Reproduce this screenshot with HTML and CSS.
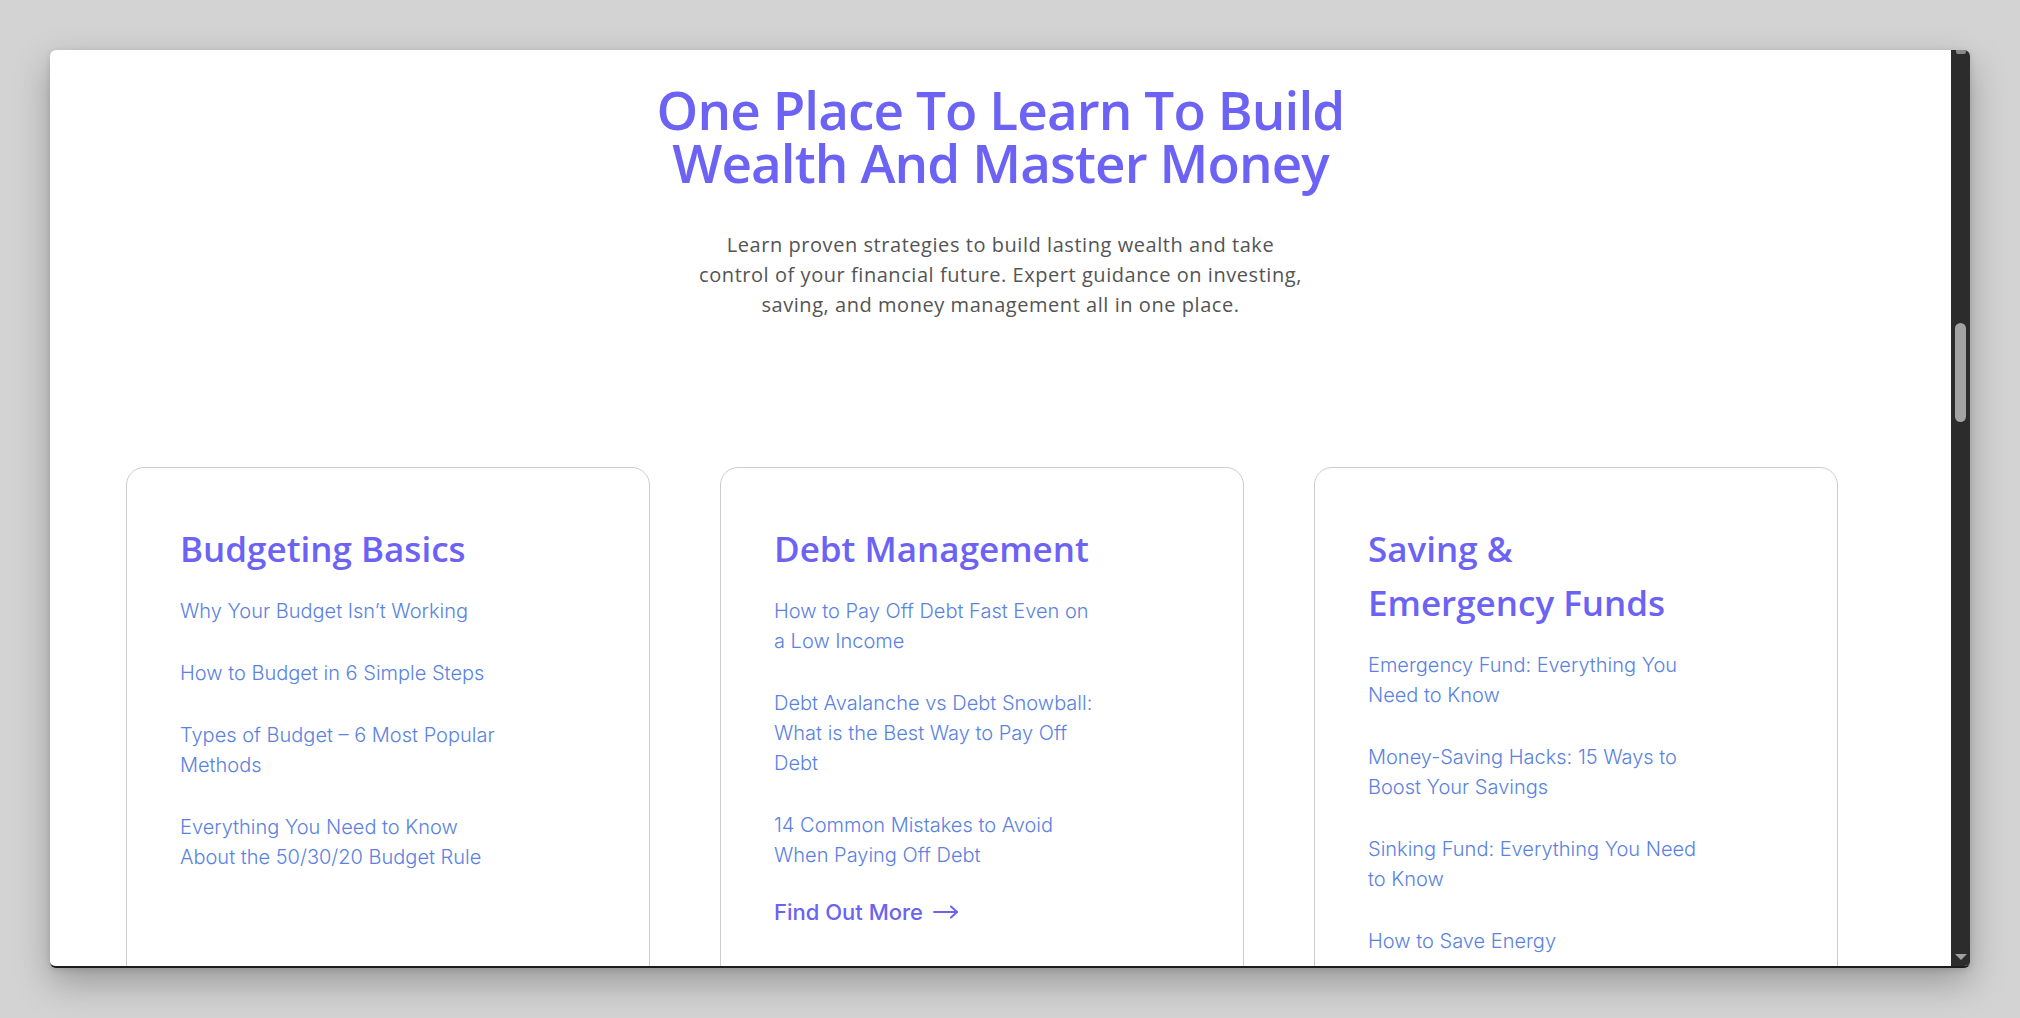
FILE: index.html
```html
<!DOCTYPE html>
<html lang="en">
<head>
<meta charset="utf-8">
<title>One Place To Learn To Build Wealth</title>
<link rel="stylesheet" href="styles.css">
</head>
<body>
<div class="window">
  <main class="viewport">
    <section class="hero">
      <h1 class="hero-title"><span class="hero-line">One Place To Learn To Build</span><span class="hero-line">Wealth And Master Money</span></h1>
      <p class="hero-text">Learn proven strategies to build lasting wealth and take<br>control of your financial future. Expert guidance on investing,<br>saving, and money management all in one place.</p>
    </section>
    <section class="cards">
      <article class="card">
        <h2 class="card-title">Budgeting Basics</h2>
        <ul class="card-links">
          <li><a href="#">Why Your Budget Isn’t Working</a></li>
          <li><a href="#">How to Budget in 6 Simple Steps</a></li>
          <li><a href="#">Types of Budget – 6 Most Popular<br>Methods</a></li>
          <li><a href="#">Everything You Need to Know<br>About the 50/30/20 Budget Rule</a></li>
        </ul>
      </article>
      <article class="card">
        <h2 class="card-title">Debt Management</h2>
        <ul class="card-links">
          <li><a href="#">How to Pay Off Debt Fast Even on<br>a Low Income</a></li>
          <li><a href="#">Debt Avalanche vs Debt Snowball:<br>What is the Best Way to Pay Off<br>Debt</a></li>
          <li><a href="#">14 Common Mistakes to Avoid<br>When Paying Off Debt</a></li>
        </ul>
        <a class="more" href="#">Find Out More <svg class="more-arrow" width="26" height="14" viewBox="0 0 26 14" fill="none" stroke="currentColor" stroke-width="2" stroke-linecap="round" stroke-linejoin="round"><path d="M1 7H24"/><path d="M18 1.5L24 7L18 12.5"/></svg></a>
      </article>
      <article class="card">
        <h2 class="card-title">Saving &amp;<br>Emergency Funds</h2>
        <ul class="card-links">
          <li><a href="#">Emergency Fund: Everything You<br>Need to Know</a></li>
          <li><a href="#">Money-Saving Hacks: 15 Ways to<br>Boost Your Savings</a></li>
          <li><a href="#">Sinking Fund: Everything You Need<br>to Know</a></li>
          <li><a href="#">How to Save Energy</a></li>
        </ul>
      </article>
    </section>
  </main>
  <div class="scrollbar">
    <span class="sb-up"></span>
    <span class="sb-thumb"></span>
    <span class="sb-down"></span>
  </div>
</div>
</body>
</html>
```

FILE: styles.css
```css
html, body {
  margin: 0;
  padding: 0;
}

body {
  background: #d3d3d3;
  height: 1018px;
  overflow: hidden;
  font-family: "Open Sans", "Noto Sans", sans-serif;
}

.window {
  margin: 50px 0 0 50px;
  width: 1920px;
  height: 918px;
  box-sizing: border-box;
  display: flex;
  background: #fff;
  border-radius: 6px;
  border-bottom: 2px solid #1c1c1c;
  box-shadow: 0 14px 36px rgba(0, 0, 0, 0.28), 0 2px 6px rgba(0, 0, 0, 0.12);
  overflow: hidden;
}

.viewport {
  flex: 1;
  overflow: hidden;
}

.hero {
  text-align: center;
  padding-top: 33px;
}

.hero-title {
  margin: 0;
  font-family: "Open Sans", sans-serif;
  font-weight: 600;
  font-size: 53px;
  line-height: 53px;
  letter-spacing: -0.9px;
  color: #6c63f5;
  display: flex;
  flex-direction: column;
  align-items: center;
}

.hero-line {
  display: block;
  height: 53px;
}

.hero-text {
  margin: 41px 0 0;
  font-family: "Open Sans", sans-serif;
  font-weight: 400;
  font-size: 20px;
  line-height: 30px;
  letter-spacing: 0.55px;
  color: #545454;
}

.cards {
  display: grid;
  grid-template-columns: repeat(3, 524px);
  column-gap: 70px;
  padding-left: 76px;
  margin-top: 147px;
}

.card {
  box-sizing: border-box;
  height: 620px;
  border: 1px solid #cdcdcd;
  border-radius: 18px;
  padding: 54px 54px 54px 53px;
  display: flex;
  flex-direction: column;
  align-items: flex-start;
}

.card-title {
  margin: 0 0 20px;
  font-family: "Open Sans", sans-serif;
  font-weight: 600;
  font-size: 35px;
  line-height: 54px;
  color: #6c63f5;
}

.card-links {
  list-style: none;
  margin: 0;
  padding: 0;
  display: flex;
  flex-direction: column;
  gap: 32px;
}

.card-links a {
  font-family: "Inter", sans-serif;
  font-weight: 300;
  font-size: 20px;
  line-height: 30px;
  color: #5a82e0;
  text-decoration: none;
  display: block;
  white-space: nowrap;
}

.more {
  margin-top: 27px;
  display: flex;
  align-items: center;
  gap: 10px;
  font-family: "Inter", sans-serif;
  font-weight: 500;
  font-size: 22px;
  line-height: 30px;
  color: #6c63f0;
  text-decoration: none;
}

.more-arrow {
  display: block;
}

.scrollbar {
  width: 19px;
  flex: none;
  background: #2c2c2c;
  display: flex;
  flex-direction: column;
  align-items: center;
}

.sb-up {
  width: 10px;
  height: 4px;
  background: #8a8a8a;
  border-radius: 0 0 2px 2px;
}

.sb-thumb {
  margin-top: 269px;
  width: 11px;
  height: 99px;
  background: #a3a3a3;
  border-radius: 6px;
}

.sb-down {
  margin-top: auto;
  margin-bottom: 6px;
  width: 0;
  height: 0;
  border-left: 6px solid transparent;
  border-right: 6px solid transparent;
  border-top: 6px solid #a0a0a0;
}
```
